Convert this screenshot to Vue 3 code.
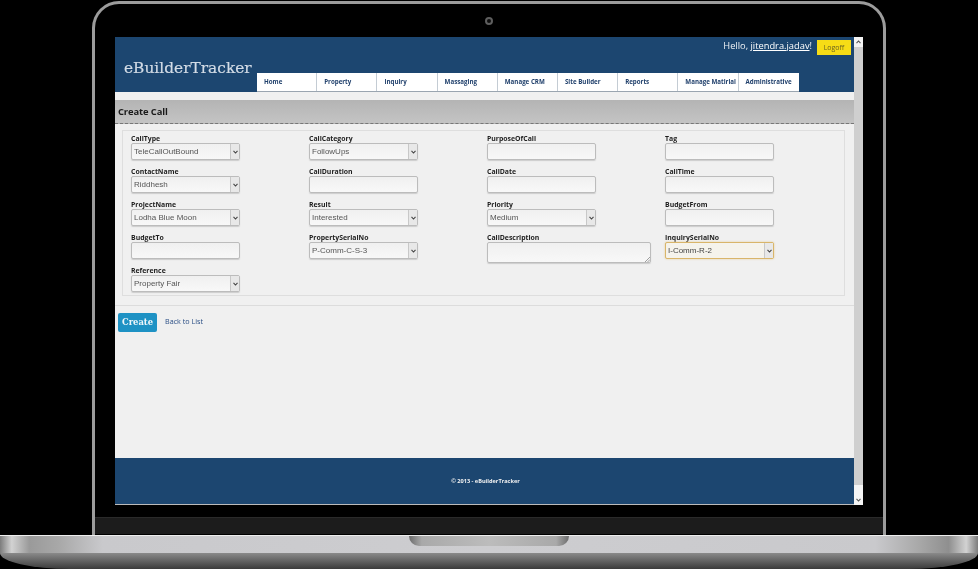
<script setup>
const tabs = ['Home', 'Property', 'Inquiry', 'Massaging', 'Manage CRM', 'Site Builder', 'Reports', 'Manage Matirial', 'Administrative']
const fields = [
  { label: 'CallType', type: 'select', value: 'TeleCallOutBound' },
  { label: 'CallCategory', type: 'select', value: 'FollowUps' },
  { label: 'PurposeOfCall', type: 'input' },
  { label: 'Tag', type: 'input' },
  { label: 'ContactName', type: 'select', value: 'Riddhesh' },
  { label: 'CallDuration', type: 'input' },
  { label: 'CallDate', type: 'input' },
  { label: 'CallTime', type: 'input' },
  { label: 'ProjectName', type: 'select', value: 'Lodha Blue Moon' },
  { label: 'Result', type: 'select', value: 'Interested' },
  { label: 'Priority', type: 'select', value: 'Medium' },
  { label: 'BudgetFrom', type: 'input' },
  { label: 'BudgetTo', type: 'input' },
  { label: 'PropertySerialNo', type: 'select', value: 'P-Comm-C-S-3' },
  { label: 'CallDescription', type: 'textarea' },
  { label: 'InquirySerialNo', type: 'select', value: 'I-Comm-R-2', focus: true },
  { label: 'Reference', type: 'select', value: 'Property Fair' },
]
</script>

<template>
  <div class="page">
    <div class="bezel">
      <div class="camera-row"><span class="camera"></span></div>
      <div class="screen">
        <div class="site">
          <header class="header">
            <div class="user-row">
              <span class="hello">Hello, <a class="user">jitendra.jadav</a>!</span>
              <button class="logoff">Logoff</button>
            </div>
            <div class="brand-row">
              <div class="logo">eBuilderTracker</div>
              <nav class="tabs">
                <a v-for="t in tabs" :key="t" class="tab">{{ t }}</a>
              </nav>
            </div>
          </header>
          <main class="main">
            <h1 class="title">Create Call</h1>
            <div class="form-wrap">
              <div class="fieldset">
                <div v-for="f in fields" :key="f.label" class="field">
                  <label class="label">{{ f.label }}</label>
                  <div v-if="f.type === 'select'" class="select" :class="{ focus: f.focus }">
                    <span class="select-value">{{ f.value }}</span>
                    <span class="arrow">
                      <svg width="5" height="4" viewBox="0 0 5 4"><path d="M0.5 0.8 L2.5 3 L4.5 0.8" fill="none" stroke="#444" stroke-width="1.1" /></svg>
                    </span>
                  </div>
                  <div v-else-if="f.type === 'textarea'" class="textarea">
                    <svg class="grip" width="6" height="6" viewBox="0 0 6 6"><path d="M1 6 L6 1 M3.5 6 L6 3.5" stroke="#888" stroke-width="0.8" /></svg>
                  </div>
                  <div v-else class="input"></div>
                </div>
              </div>
            </div>
            <div class="actions">
              <button class="create">Create</button>
              <a class="back">Back to List</a>
            </div>
          </main>
          <footer class="footer">© 2013 - eBuilderTracker</footer>
        </div>
        <div class="scrollbar">
          <span class="sb-btn sb-up"><svg width="5" height="4" viewBox="0 0 5 4"><path d="M0.5 3.2 L2.5 1 L4.5 3.2" fill="none" stroke="#555" stroke-width="1.1" /></svg></span>
          <span class="sb-btn sb-down"><svg width="5" height="4" viewBox="0 0 5 4"><path d="M0.5 0.8 L2.5 3 L4.5 0.8" fill="none" stroke="#555" stroke-width="1.1" /></svg></span>
        </div>
      </div>
      <div class="chin"></div>
    </div>
    <div class="base">
      <div class="lid-edge">
        <span class="notch"></span>
      </div>
      <div class="foot"></div>
    </div>
  </div>
</template>

<style>
html, body { margin: 0; background: #000; }
</style>

<style scoped>
.page {
  width: 978px;
  height: 569px;
  background: #000;
  overflow: hidden;
  display: flex;
  flex-direction: column;
  font-family: "Open Sans", "Liberation Sans", sans-serif;
}
.bezel {
  margin: 1px 92px 0;
  height: 534px;
  box-sizing: border-box;
  border: 3px solid #9c9c9c;
  border-bottom: 0;
  border-radius: 27px 27px 0 0;
  display: flex;
  flex-direction: column;
}
.camera-row { height: 33px; display: flex; justify-content: center; align-items: flex-start; }
.camera {
  margin-top: 13px;
  width: 8px;
  height: 8px;
  box-sizing: border-box;
  border: 2px solid #5e5e5e;
  border-radius: 50%;
  background: #0c0c0c;
}
.screen {
  margin-left: 20px;
  width: 748px;
  height: 468px;
  display: flex;
  filter: blur(0.45px);
}
.site {
  width: 739px;
  display: flex;
  flex-direction: column;
  background: #f0f0f0;
  border-bottom: 1px solid #bbb;
  box-sizing: border-box;
}
.header {
  height: 55px;
  background: #1c4670;
  display: flex;
  flex-direction: column;
  box-sizing: border-box;
}
.user-row {
  height: 17px;
  padding: 3px 3px 0 0;
  display: flex;
  justify-content: flex-end;
  align-items: flex-start;
  gap: 5px;
  box-sizing: content-box;
}
.hello { color: #eef2f6; font: 9.3px/13px "Open Sans", sans-serif; margin-top: -1px; }
.user { color: #fff; text-decoration: underline; }
.logoff {
  width: 34px;
  height: 15px;
  padding: 0;
  border: 0;
  background: #f7dc16;
  color: #6b6320;
  font: 7px/15px "Open Sans", sans-serif;
}
.brand-row { flex: 1; display: flex; align-items: flex-end; min-height: 0; }
.logo {
  padding-left: 9px;
  width: 133px;
  height: 35px;
  color: #d3dce6;
  font: 15.4px/22px "DejaVu Serif", serif;
  white-space: nowrap;
  -webkit-text-stroke: 0.2px #d3dce6;
}
.tabs { display: flex; background: #fff; height: 19px; border-bottom: 1px solid #9aa5b0; box-sizing: border-box; }
.tab {
  width: 60.2px;
  box-sizing: border-box;
  padding-left: 7px;
  border-right: 1px solid #c4ccd4;
  color: #1f3f6b;
  font: 700 6.2px/18px "Open Sans", sans-serif;
  white-space: nowrap;
}
.tab:last-child { border-right: 0; }
.main { flex: 1; background: #f0f0f0; padding-top: 8px; display: flex; flex-direction: column; }
.title {
  margin: 0;
  height: 24px;
  box-sizing: border-box;
  padding-left: 3px;
  background: linear-gradient(#b4b4b4, #c4c4c4);
  border-bottom: 1px dashed #777;
  color: #1a1a1a;
  font: 700 9.4px/23px "Open Sans", sans-serif;
  letter-spacing: -0.1px;
}
.form-wrap {
  height: 182px;
  padding: 6px 9px 0 7px;
  box-sizing: border-box;
  border-bottom: 1px solid #dcdcdc;
}
.fieldset {
  height: 166px;
  box-sizing: border-box;
  border: 1px solid #dedede;
  padding: 3px 0 0 8px;
  display: grid;
  grid-template-columns: repeat(4, 178px);
  grid-auto-rows: 33px;
  align-content: start;
}
.field { display: flex; flex-direction: column; align-items: flex-start; }
.label {
  color: #1e1e1e;
  font: 700 6.9px/9px "Open Sans", sans-serif;
  height: 9px;
}
.select, .input, .textarea {
  width: 109px;
  height: 17px;
  box-sizing: border-box;
  border: 1px solid #bcbcbc;
  border-radius: 2px;
  background: linear-gradient(#f0f0f0, #f8f8f8);
  box-shadow: 0 1px 1px #cccccc;
  position: relative;
  flex-shrink: 0;
}
.select {
  display: flex;
  align-items: center;
  justify-content: space-between;
  padding-left: 2px;
  color: #555;
  font: 8px/15px "Liberation Sans", sans-serif;
}
.select-value { white-space: nowrap; }
.arrow {
  width: 9px;
  height: 100%;
  box-sizing: border-box;
  border-left: 1px solid #c8c8c8;
  background: #e8e8e8;
  display: flex;
  align-items: center;
  justify-content: center;
}
.select.focus { border-color: #d9b56a; background: #f5f3ec; box-shadow: 0 0 2px #e2c98c; color: #444; }
.textarea { width: 164px; height: 21px; }
.grip { position: absolute; right: 0; bottom: 0; }
.actions { display: flex; align-items: center; gap: 8px; padding: 7px 0 0 3px; }
.create {
  width: 39px;
  height: 19px;
  padding: 0;
  border: 0;
  border-radius: 2px;
  background: #1e92c4;
  color: #eef6fa;
  font: 700 8.4px/19px "DejaVu Serif", serif;
}
.back { color: #2b4f86; font: 7.2px/10px "Open Sans", sans-serif; margin-top: -3px; }
.footer {
  height: 46px;
  background: #1c4670;
  color: #f2f2f2;
  text-align: center;
  font: 700 5.6px/47px "Open Sans", sans-serif;
  padding-left: 2px;
  box-sizing: border-box;
  flex-shrink: 0;
}
.scrollbar {
  width: 9px;
  background: #cfcfcf;
  display: flex;
  flex-direction: column;
  justify-content: space-between;
}
.sb-btn { background: #f4f4f4; display: flex; justify-content: center; align-items: center; box-sizing: border-box; }
.sb-up { height: 10px; }
.sb-down { height: 20px; padding-top: 10px; }
.chin {
  margin-top: 12px;
  height: 17px;
  background: #1c1c1c;
  border-top: 1px solid #2a2a2a;
  box-sizing: border-box;
}
.base { flex: 1; display: flex; flex-direction: column; }
.lid-edge {
  height: 18px;
  display: flex;
  justify-content: center;
  background: linear-gradient(90deg, #7c7c7c 0, #d2d2d2 1.2%, #9a9a9a 3%, #a8a8a8 6%, #c9c9cc 10.5%, #cdcdd0 50%, #c9c9cc 89.5%, #a8a8a8 94%, #8f8f8f 97%, #d2d2d2 98.8%, #7c7c7c 100%);
  border-top: 1px solid #eee;
  box-sizing: border-box;
}
.notch {
  width: 160px;
  height: 10px;
  border-radius: 0 0 10px 10px;
  background: linear-gradient(90deg, #6d6d6d 0, #a9a9a9 8%, #bcbcbc 50%, #a9a9a9 92%, #6d6d6d 100%);
}
.foot {
  flex: 1;
  background: linear-gradient(#8a8a8a, #3a3a3a);
  border-radius: 0 0 70px 70px / 0 0 16px 16px;
}
</style>
